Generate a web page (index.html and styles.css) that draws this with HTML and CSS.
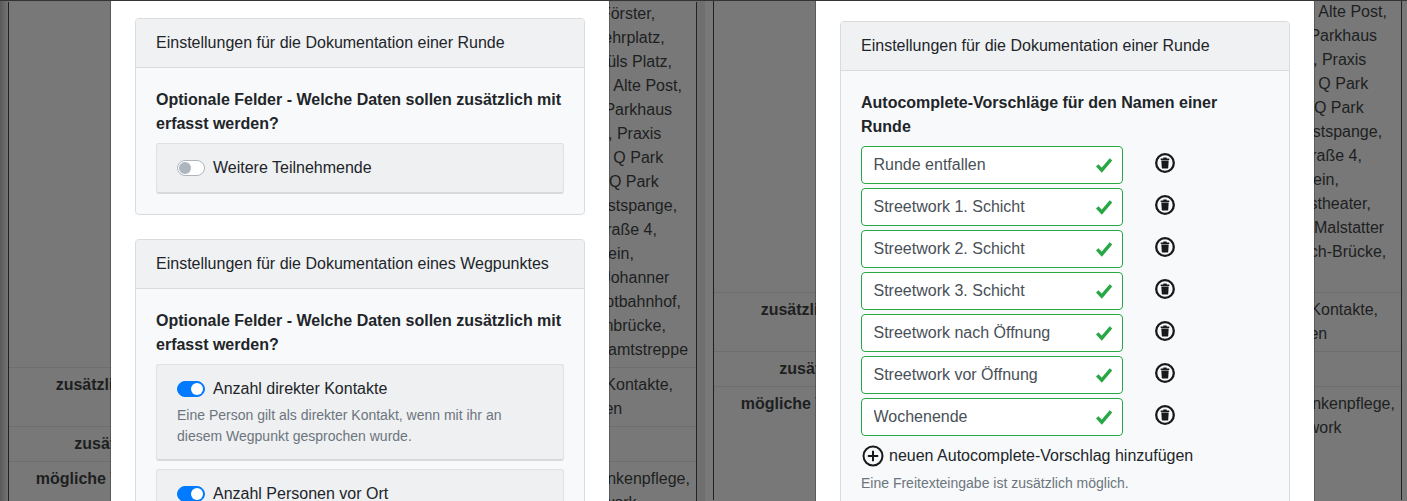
FILE: index.html
```html
<!DOCTYPE html>
<html lang="de">

<head>
    <meta charset="UTF-8">
    <meta name="viewport" content="width=device-width, initial-scale=1.0">
    <title>Einstellungen</title>
    <link rel="stylesheet" href="styles.css">
</head>

<body>

    <svg class="icon-defs" width="0" height="0" aria-hidden="true">
        <symbol id="icon-trash" viewBox="0 0 20 20">
            <circle cx="10" cy="10" r="8.8" fill="none" stroke="currentColor" stroke-width="2.3" />
            <path fill="currentColor" d="M8.3 4.4h3.4v1h2.6v1.5H5.7V5.4h2.6zM6.3 7.6h7.4l-.5 7.4c0 .3-.2.5-.5.5H7.3c-.3 0-.5-.2-.5-.5z" />
        </symbol>
        <symbol id="icon-plus" viewBox="0 0 22 22">
            <circle cx="11" cy="11" r="9.5" fill="none" stroke="currentColor" stroke-width="2" />
            <path fill="none" stroke="currentColor" stroke-width="2" d="M11 5.8v10.4M5.8 11h10.4" />
        </symbol>
        <symbol id="icon-check" viewBox="0 0 16 16">
            <path fill="none" stroke="currentColor" stroke-width="3.4" d="M1.2 8.4l4.6 4.8L15 2.4" />
        </symbol>
    </svg>

    <div class="panes">

        <!-- linke Ansicht -->
        <section class="pane pane-left">
            <div class="table-wrap">
                <table class="stats">
                    <tr>
                        <th></th>
                        <td>Beim Förster,<br>Am Wehrplatz,<br>Neu Müls Platz,<br>Kirche, Alte Post,<br>Markt Parkhaus<br>Straße, Praxis<br>Schule Q Park<br>Wiese Q Park<br>An Westspange,<br>Bergstraße 4,<br>An Verein,<br>Neue Johanner<br>U Hauptbahnhof,<br>S-Bahnbrücke,<br>Finanzamtstreppe</td>
                    </tr>
                    <tr>
                        <th>zusätzliche Orte</th>
                        <td>Keine Kontakte,<br>Gruppen</td>
                    </tr>
                    <tr>
                        <th>zusätzliche</th>
                        <td></td>
                    </tr>
                    <tr>
                        <th>mögliche Teilnehmer.</th>
                        <td>an Krankenpflege,<br>Streetwork</td>
                    </tr>
                </table>
            </div>

            <div class="modal">
                <div class="card">
                    <div class="card-header">Einstellungen für die Dokumentation einer Runde</div>
                    <div class="card-body">
                        <p class="field-title">Optionale Felder - Welche Daten sollen zusätzlich mit erfasst werden?</p>
                        <div class="option">
                            <label class="switch"><span class="toggle"></span>Weitere Teilnehmende</label>
                        </div>
                    </div>
                </div>

                <div class="card">
                    <div class="card-header">Einstellungen für die Dokumentation eines Wegpunktes</div>
                    <div class="card-body">
                        <p class="field-title">Optionale Felder - Welche Daten sollen zusätzlich mit erfasst werden?</p>
                        <div class="option">
                            <label class="switch"><span class="toggle on"></span>Anzahl direkter Kontakte</label>
                            <p class="help">Eine Person gilt als direkter Kontakt, wenn mit ihr an diesem Wegpunkt gesprochen wurde.</p>
                        </div>
                        <div class="option">
                            <label class="switch"><span class="toggle on"></span>Anzahl Personen vor Ort</label>
                        </div>
                    </div>
                </div>
            </div>
        </section>

        <!-- rechte Ansicht -->
        <section class="pane pane-right">
            <div class="table-wrap">
                <table class="stats">
                    <tr>
                        <th></th>
                        <td>Kirche, Alte Post,<br>Markt Parkhaus<br>Straße, Praxis<br>Schule Q Park<br>Wiese Q Park<br>An Westspange,<br>Bergstraße 4,<br>An Verein,<br>Landestheater,<br>Obere Malstatter<br>Walbach-Brücke,<br>&nbsp;</td>
                    </tr>
                    <tr>
                        <th>zusätzliche Orte</th>
                        <td>Keine Kontakte,<br>Gruppen</td>
                    </tr>
                    <tr>
                        <th>zusätzliche</th>
                        <td></td>
                    </tr>
                    <tr>
                        <th>mögliche Teilnehmer.</th>
                        <td>an Krankenpflege,<br>Streetwork<br>&nbsp;</td>
                    </tr>
                </table>
            </div>

            <div class="modal">
                <div class="card">
                    <div class="card-header">Einstellungen für die Dokumentation einer Runde</div>
                    <div class="card-body">
                        <p class="field-title">Autocomplete-Vorschläge für den Namen einer Runde</p>

                        <div class="suggestions">
                            <div class="suggestion">
                                <div class="field"><input type="text" value="Runde entfallen" readonly><svg class="check"><use href="#icon-check" /></svg></div>
                                <svg class="trash"><use href="#icon-trash" /></svg>
                            </div>
                            <div class="suggestion">
                                <div class="field"><input type="text" value="Streetwork 1. Schicht" readonly><svg class="check"><use href="#icon-check" /></svg></div>
                                <svg class="trash"><use href="#icon-trash" /></svg>
                            </div>
                            <div class="suggestion">
                                <div class="field"><input type="text" value="Streetwork 2. Schicht" readonly><svg class="check"><use href="#icon-check" /></svg></div>
                                <svg class="trash"><use href="#icon-trash" /></svg>
                            </div>
                            <div class="suggestion">
                                <div class="field"><input type="text" value="Streetwork 3. Schicht" readonly><svg class="check"><use href="#icon-check" /></svg></div>
                                <svg class="trash"><use href="#icon-trash" /></svg>
                            </div>
                            <div class="suggestion">
                                <div class="field"><input type="text" value="Streetwork nach Öffnung" readonly><svg class="check"><use href="#icon-check" /></svg></div>
                                <svg class="trash"><use href="#icon-trash" /></svg>
                            </div>
                            <div class="suggestion">
                                <div class="field"><input type="text" value="Streetwork vor Öffnung" readonly><svg class="check"><use href="#icon-check" /></svg></div>
                                <svg class="trash"><use href="#icon-trash" /></svg>
                            </div>
                            <div class="suggestion">
                                <div class="field"><input type="text" value="Wochenende" readonly><svg class="check"><use href="#icon-check" /></svg></div>
                                <svg class="trash"><use href="#icon-trash" /></svg>
                            </div>
                        </div>

                        <div class="add-row">
                            <svg class="plus"><use href="#icon-plus" /></svg>
                            <span>neuen Autocomplete-Vorschlag hinzufügen</span>
                        </div>
                        <p class="help">Eine Freitexteingabe ist zusätzlich möglich.</p>
                    </div>
                </div>
            </div>
        </section>

    </div>

</body>

</html>
```

FILE: styles.css
```css
* {
    box-sizing: border-box;
}

html,
body {
    height: 501px;
    margin: 0;
    overflow: hidden;
}

body {
    font-family: "Liberation Sans", Arial, sans-serif;
    font-size: 16px;
    line-height: 24px;
    color: #212529;
    background: #787878;
    border-top: 1px solid #343434;
}

.icon-defs {
    display: block;
}

.panes {
    display: flex;
    height: 500px;
}

.pane {
    position: relative;
    overflow: hidden;
    height: 500px;
}

.pane-left {
    width: 705px;
    padding: 0 8px;
    background: linear-gradient(to right, #5a5a5a, #747474 8px, #747474 697px, #6f6f6f 697px);
}

.pane-right {
    width: 702px;
    padding: 0 5px 0 8px;
}

.table-wrap {
    height: 100%;
    background: #787878;
    border-left: 1px solid #222;
    border-right: 1px solid #222;
}

.pane-left .stats {
    margin-top: 1px;
}

.pane-right .stats {
    margin-top: -1px;
}

/* Tabelle hinter dem Dialog */
.stats {
    width: 100%;
    table-layout: fixed;
    border-collapse: collapse;
    color: #1d1f21;
}

.stats th {
    width: 216px;
    padding: 5px 0;
    font-weight: bold;
    text-align: center;
    vertical-align: top;
    white-space: nowrap;
}

.stats td {
    padding: 5px 12px 5px 335px;
    vertical-align: top;
    white-space: nowrap;
}

.stats tr + tr th,
.stats tr + tr td {
    border-top: 1px solid #6e6e6e;
}

.stats tr:first-child td {
    padding-top: 0;
}

.pane-right .stats tr:first-child td {
    padding-bottom: 4px;
}

.modal {
    position: absolute;
    top: 0;
    left: 111px;
    bottom: 0;
    width: 498px;
    padding: 17px 24px 0;
    background: #fff;
    box-shadow: 0 0 0 1px rgba(0, 0, 0, 0.25);
}

.pane-right .modal {
    padding-top: 20px;
}

.card {
    margin-bottom: 24px;
    background: #f8f9fa;
    border: 1px solid #dadbdd;
    border-radius: 4px;
}

.card-header {
    height: 49px;
    padding: 12px 20px;
    background: #f0f1f3;
    border-bottom: 1px solid #dadbdd;
    border-radius: 3px 3px 0 0;
}

.card-body {
    padding: 20px;
}

.field-title {
    margin: 0 0 7px;
    font-weight: bold;
}

.option {
    margin-bottom: 8px;
    padding: 12px 20px;
    background: #eff0f2;
    border: 1px solid #dee0e3;
    border-bottom: 2px solid #d8d9dc;
    border-radius: 3px;
}

.option:last-child {
    margin-bottom: 0;
}

.switch {
    display: flex;
    align-items: center;
}

.toggle {
    position: relative;
    flex: none;
    width: 28px;
    height: 16px;
    margin-right: 8px;
    background: #fff;
    border: 1px solid #adb5bd;
    border-radius: 8px;
}

.toggle::after {
    content: "";
    position: absolute;
    top: 1px;
    left: 1px;
    width: 12px;
    height: 12px;
    background: #adb5bd;
    border-radius: 50%;
}

.toggle.on {
    background: #007bff;
    border-color: #007bff;
}

.toggle.on::after {
    left: 13px;
    background: #fff;
}

.help {
    margin: 4px 0 0;
    font-size: 14px;
    line-height: 21px;
    color: #6c757d;
}

.suggestions {
    display: flex;
    flex-direction: column;
    gap: 4px;
}

.suggestion {
    display: flex;
    align-items: flex-start;
    gap: 32px;
}

.field {
    display: flex;
    align-items: center;
    width: 262px;
    height: 38px;
    padding-right: 10px;
    background: #fff;
    border: 1px solid #28a745;
    border-radius: 4px;
}

.field input {
    flex: 1;
    min-width: 0;
    padding: 0 0 0 11.5px;
    font: inherit;
    color: #495057;
    background: transparent;
    border: 0;
    outline: none;
}

.check {
    width: 16px;
    height: 16px;
    color: #28a745;
}

.trash {
    width: 20px;
    height: 20px;
    margin-top: 7px;
    color: #17191b;
}

.add-row {
    display: flex;
    align-items: center;
    gap: 5px;
    margin-top: 8px;
    padding-left: 1px;
}

.plus {
    width: 22px;
    height: 22px;
    color: #17191b;
}

.add-row + .help {
    margin-top: 5px;
}
```
